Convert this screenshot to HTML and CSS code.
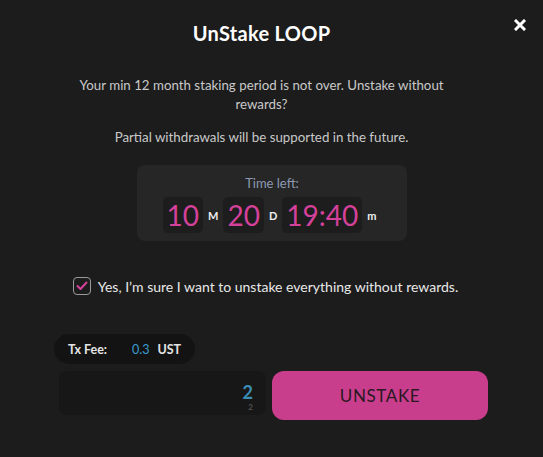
FILE: index.html
```html
<!DOCTYPE html>
<html>
<head>
<meta charset="utf-8">
<link rel="stylesheet" href="styles.css">
</head>
<body>
<div class="modal">
  <button class="close" aria-label="Close">
    <svg width="12" height="12" viewBox="0 0 12 12"><path d="M2 2 L10 10 M10 2 L2 10" stroke="#fff" stroke-width="3" stroke-linecap="square"/></svg>
  </button>
  <h1 class="title">UnStake LOOP</h1>
  <p class="msg">Your min 12 month staking period is not over. Unstake without rewards?</p>
  <p class="msg msg2">Partial withdrawals will be supported in the future.</p>
  <div class="timer">
    <div class="timer-label">Time left:</div>
    <div class="timer-row">
      <span class="digit">10</span><span class="unit">M</span>
      <span class="digit">20</span><span class="unit">D</span>
      <span class="digit">19:40</span><span class="unit">m</span>
    </div>
  </div>
  <label class="confirm">
    <span class="checkbox">
      <svg width="12" height="10" viewBox="0 0 12 10"><path d="M1.5 5 L4.5 8 L10.5 1.5" fill="none" stroke="#d4419a" stroke-width="2" stroke-linecap="round" stroke-linejoin="round"/></svg>
    </span>
    <span class="confirm-text">Yes, I’m sure I want to unstake everything without rewards.</span>
  </label>
  <div class="fee">
    <span class="fee-label">Tx Fee:</span>
    <span class="fee-val">0.3</span>
    <span class="fee-unit">UST</span>
  </div>
  <div class="actions">
    <div class="amount">
      <span class="amount-val">2</span>
      <span class="amount-sub">2</span>
    </div>
    <button class="unstake">UNSTAKE</button>
  </div>
</div>
</body>
</html>
```
FILE: styles.css
```css
* { box-sizing: border-box; }
html, body { margin: 0; padding: 0; }
body {
  background: #1c1c1c;
  font-family: Lato, "Noto Sans", sans-serif;
  color: #e6e6e6;
  width: 543px;
  height: 457px;
  overflow: hidden;
}
.modal {
  position: relative;
  padding: 22px 0 0;
  display: flex;
  flex-direction: column;
  align-items: center;
}
.close {
  position: absolute;
  top: 19px;
  right: 17px;
  background: none;
  border: 0;
  padding: 0;
  width: 12px;
  height: 12px;
  display: flex;
}
.title {
  margin: 0 20px 0 0;
  font-size: 20px;
  font-weight: 700;
  color: #fff;
  line-height: 22px;
  letter-spacing: 0.3px;
}
.msg {
  margin: 32px 20px 0 0;
  width: 380px;
  text-align: center;
  font-size: 13.3px;
  line-height: 19px;
  color: #c9c9c9;
}
.msg2 { margin-top: 14px; }
.timer {
  margin-top: 18px;
  width: 270px;
  margin-left: 1px;
  background: #262626;
  border-radius: 8px;
  padding: 10px 0 8px;
  display: flex;
  flex-direction: column;
  align-items: center;
}
.timer-label {
  font-size: 13px;
  color: #8d9ab2;
  line-height: 16px;
}
.timer-row {
  margin-top: 6px;
  display: flex;
  align-items: center;
  margin-left: 0;
}
.digit {
  background: #1d1d1d;
  border-radius: 5px;
  padding: 0 4px;
  height: 36px;
  font-size: 28px;
  font-weight: 400;
  line-height: 36px;
  color: #d4419a;
}
.unit {
  font-size: 11px;
  font-weight: 700;
  color: #eee;
  margin: 0 5px;
}
.confirm {
  margin-top: 36px;
  margin-right: 12px;
  display: flex;
  align-items: center;
  gap: 7px;
}
.checkbox {
  width: 18px;
  height: 18px;
  border: 1.5px solid #9a9a9a;
  border-radius: 4px;
  display: flex;
  align-items: center;
  justify-content: center;
}
.confirm-text {
  font-size: 14px;
  color: #e8e8e8;
}
.fee {
  align-self: flex-start;
  margin: 39px 0 0 54px;
  height: 30px;
  background: #131313;
  border-radius: 15px;
  padding: 0 14px;
  display: flex;
  align-items: center;
  font-size: 12.5px;
  font-weight: 700;
}
.fee-label { color: #e4e4e4; width: 64px; }
.fee-val { color: #3a9ed2; font-weight: 400; margin-right: 8px; }
.fee-unit { color: #e4e4e4; }
.actions {
  align-self: flex-start;
  margin: 7px 0 0 59px;
  display: flex;
  gap: 6px;
}
.amount {
  width: 207px;
  height: 44px;
  background: #171717;
  border-radius: 8px;
  display: flex;
  flex-direction: column;
  align-items: flex-end;
  padding: 12px 13px 0 0;
}
.amount-val {
  font-size: 18px;
  font-weight: 700;
  color: #3b8db4;
  line-height: 18px;
}
.amount-sub {
  margin-top: 2px;
  font-size: 8px;
  color: #555;
  font-weight: 700;
  line-height: 9px;
}
.unstake {
  width: 216px;
  height: 49px;
  border: 0;
  border-radius: 12px;
  background: #c83e8d;
  color: #2a1822;
  font-family: Lato, sans-serif;
  font-size: 17px;
  letter-spacing: 0.6px;
}
```
